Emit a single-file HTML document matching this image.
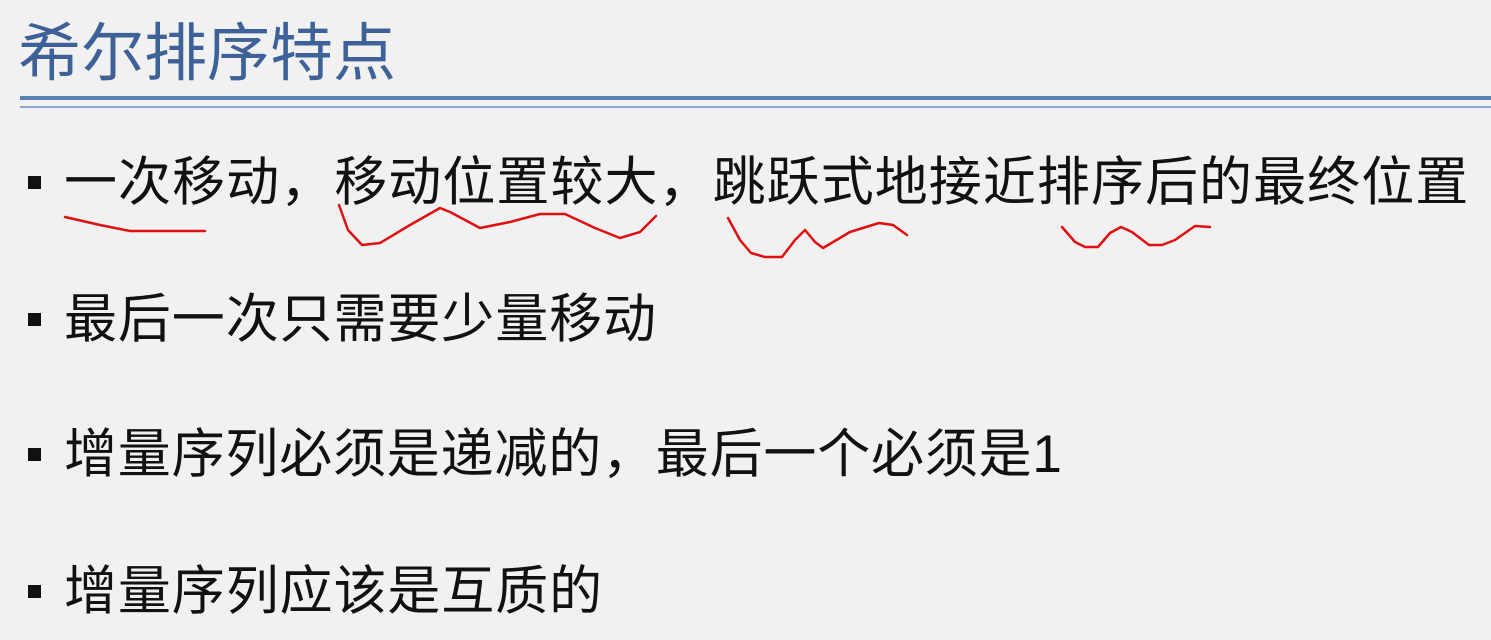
<!DOCTYPE html>
<html><head><meta charset="utf-8"><style>
html,body{margin:0;padding:0}
body{width:1491px;height:640px;background:#f1f1f1;position:relative;overflow:hidden;font-family:"Liberation Sans","Microsoft YaHei","Noto Sans CJK SC",sans-serif}
.t{position:absolute;left:18px;top:14px;font-size:63px;color:#3e6297;line-height:80px;white-space:nowrap;letter-spacing:0px}
.l1{position:absolute;left:20px;right:0;top:96px;height:4px;background:#5b82b4}
.l2{position:absolute;left:20px;right:0;top:106px;height:2px;background:#8aa6cc}
.b{position:absolute;left:64px;font-size:53px;color:#111;line-height:70px;white-space:nowrap;letter-spacing:0.9px}
.sq{position:absolute;left:28px;width:13px;height:13px;background:#111}
</style></head><body>
<div class="t">希尔排序特点</div>
<div class="l1"></div><div class="l2"></div>
<div class="sq" style="top:176px"></div>
<div class="b" style="top:148px;letter-spacing:1.05px">一次移动，移动位置较大，跳跃式地接近排序后的最终位置</div>
<div class="sq" style="top:313px"></div>
<div class="b" style="top:285px">最后一次只需要少量移动</div>
<div class="sq" style="top:448px"></div>
<div class="b" style="top:420px;letter-spacing:0.8px">增量序列必须是递减的，最后一个必须是1</div>
<div class="sq" style="top:585px"></div>
<div class="b" style="top:557px">增量序列应该是互质的</div>
<svg width="1491" height="640" style="position:absolute;left:0;top:0" fill="none" stroke="#e01010" stroke-width="2.5" stroke-linejoin="round" stroke-linecap="round">
<path d="M65,217 L100,225 L130,231 L205,231"/>
<path d="M339,205 L348,230 L362,245 L380,243 L410,225 L440,208 L450,212 L480,228 L510,222 L540,214 L565,214 L595,228 L620,238 L640,232 L650,222 L656,216"/>
<path d="M728,218 L740,240 L751,253 L765,257 L782,257 L795,240 L805,230 L815,242 L823,248 L850,232 L879,223 L893,225 L907,235"/>
<path d="M1062,227 L1075,242 L1085,247 L1098,247 L1110,233 L1121,227 L1132,232 L1149,245 L1162,245 L1175,240 L1195,226 L1210,227"/>
</svg>
</body></html>
